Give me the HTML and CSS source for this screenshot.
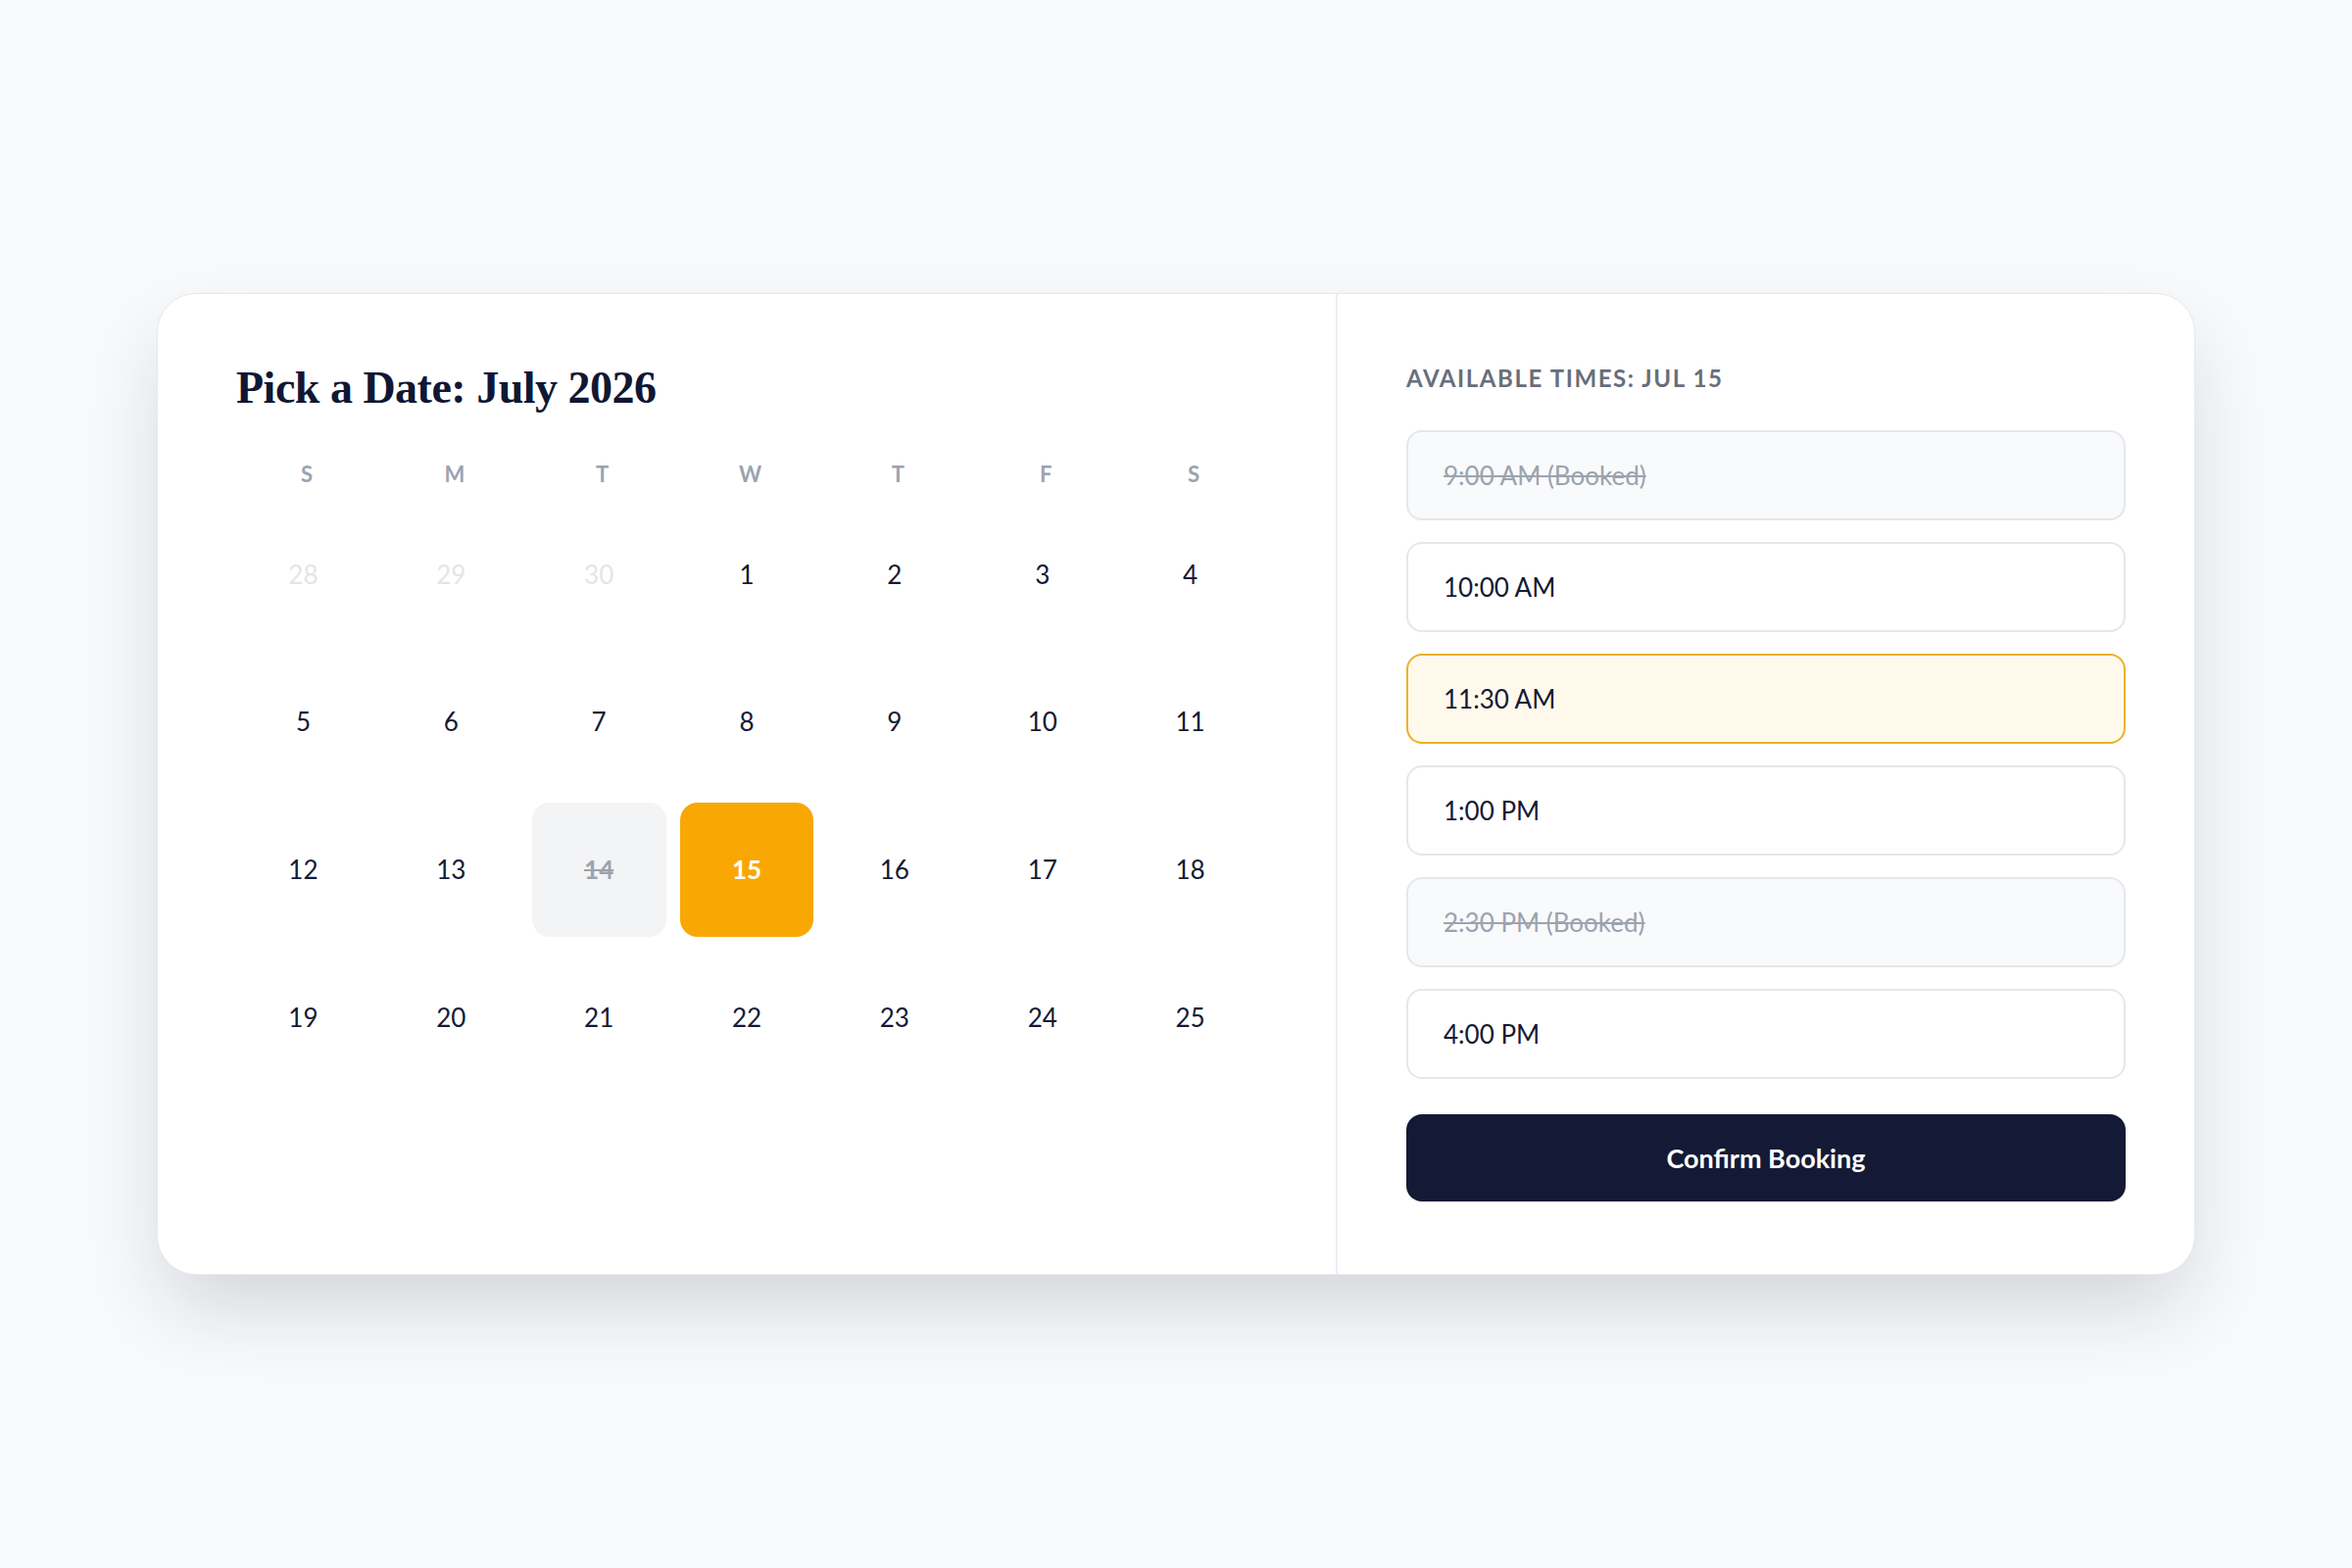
FILE: index.html
```html
<!DOCTYPE html>
<html lang="en">

<head>
    <meta charset="UTF-8">
    <meta name="viewport" content="width=device-width, initial-scale=1.0">
    <link rel="stylesheet" href="styles.css">
    <title>Pick a Date</title>
</head>

<body>
    <div class="booking-card">
        <div class="calendar-pane">
            <h1 class="calendar-title">Pick a Date: July 2026</h1>
            <div class="weekdays">
                <span>S</span>
                <span>M</span>
                <span>T</span>
                <span>W</span>
                <span>T</span>
                <span>F</span>
                <span>S</span>
            </div>
            <div class="days">
                <div class="day muted">28</div>
                <div class="day muted">29</div>
                <div class="day muted">30</div>
                <div class="day">1</div>
                <div class="day">2</div>
                <div class="day">3</div>
                <div class="day">4</div>
                <div class="day">5</div>
                <div class="day">6</div>
                <div class="day">7</div>
                <div class="day">8</div>
                <div class="day">9</div>
                <div class="day">10</div>
                <div class="day">11</div>
                <div class="day">12</div>
                <div class="day">13</div>
                <div class="day booked">14</div>
                <div class="day selected">15</div>
                <div class="day">16</div>
                <div class="day">17</div>
                <div class="day">18</div>
                <div class="day">19</div>
                <div class="day">20</div>
                <div class="day">21</div>
                <div class="day">22</div>
                <div class="day">23</div>
                <div class="day">24</div>
                <div class="day">25</div>
            </div>
        </div>

        <div class="times-pane">
            <h2 class="times-title">Available Times: Jul 15</h2>
            <div class="slots">
                <div class="slot booked">9:00 AM (Booked)</div>
                <div class="slot">10:00 AM</div>
                <div class="slot selected">11:30 AM</div>
                <div class="slot">1:00 PM</div>
                <div class="slot booked">2:30 PM (Booked)</div>
                <div class="slot">4:00 PM</div>
            </div>
            <button class="confirm-btn">Confirm Booking</button>
        </div>
    </div>
</body>

</html>
```

FILE: styles.css
```css
body {
    font-family: 'Lato', 'Noto Sans', sans-serif;
    background-color: #f8f9fb;
    margin: 0;
    padding: 0;
    display: flex;
    align-items: center;
    justify-content: center;
    height: 100vh;
    color: #141a35;
}

.booking-card {
    width: 2080px;
    display: flex;
    background-color: #fff;
    border: 1px solid #e6e8ec;
    border-radius: 40px;
    box-shadow: 0 40px 80px -10px rgba(17, 24, 39, 0.16);
    overflow: hidden;
    box-sizing: border-box;
}

.calendar-pane {
    width: 1204px;
    padding: 68px 80px;
    box-sizing: border-box;
    border-right: 2px solid #eceef1;
}

.calendar-title {
    font-family: 'Liberation Serif', serif;
    font-size: 46px;
    font-weight: bold;
    line-height: 1.2;
    letter-spacing: -0.5px;
    margin: 0 0 40px 0;
    color: #111733;
}

.weekdays,
.days {
    display: grid;
    grid-template-columns: repeat(7, 1fr);
    column-gap: 14px;
}

.weekdays {
    height: 40px;
    align-items: center;
    margin-bottom: 14px;
}

.weekdays span {
    text-align: center;
    font-size: 22px;
    font-weight: bold;
    letter-spacing: 1px;
    color: #9ca3af;
    padding-left: 8px;
}

.days {
    row-gap: 14px;
}

.day {
    aspect-ratio: 1;
    display: flex;
    align-items: center;
    justify-content: center;
    font-size: 26px;
    border-radius: 18px;
}

.day.muted {
    color: #e3e5e8;
}

.day.booked {
    background-color: #f3f4f6;
    color: #9ca3af;
    font-weight: bold;
    text-decoration: line-through;
}

.day.selected {
    background-color: #f9a803;
    color: #fff;
    font-weight: bold;
}

.times-pane {
    flex: 1;
    padding: 72px 70px 74px;
    box-sizing: border-box;
}

.times-title {
    font-size: 24px;
    font-weight: bold;
    line-height: 28px;
    letter-spacing: 1.6px;
    text-transform: uppercase;
    color: #686e7a;
    margin: 0 0 39px 0;
}

.slots {
    display: flex;
    flex-direction: column;
    gap: 22px;
}

.slot {
    height: 92px;
    display: flex;
    align-items: center;
    padding: 0 36px;
    font-size: 26px;
    border: 2px solid #e5e7eb;
    border-radius: 16px;
    box-sizing: border-box;
    background-color: #fff;
}

.slot.booked {
    background-color: #f9fafb;
    color: #9ca3af;
    text-decoration: line-through;
}

.slot.selected {
    background-color: #fff9ec;
    border-color: #ebb02a;
}

.confirm-btn {
    width: 100%;
    height: 89px;
    margin-top: 36px;
    font-family: 'Lato', 'Noto Sans', sans-serif;
    font-size: 27px;
    font-weight: bold;
    color: #fff;
    background-color: #141a35;
    border: none;
    border-radius: 16px;
    cursor: pointer;
}
```
